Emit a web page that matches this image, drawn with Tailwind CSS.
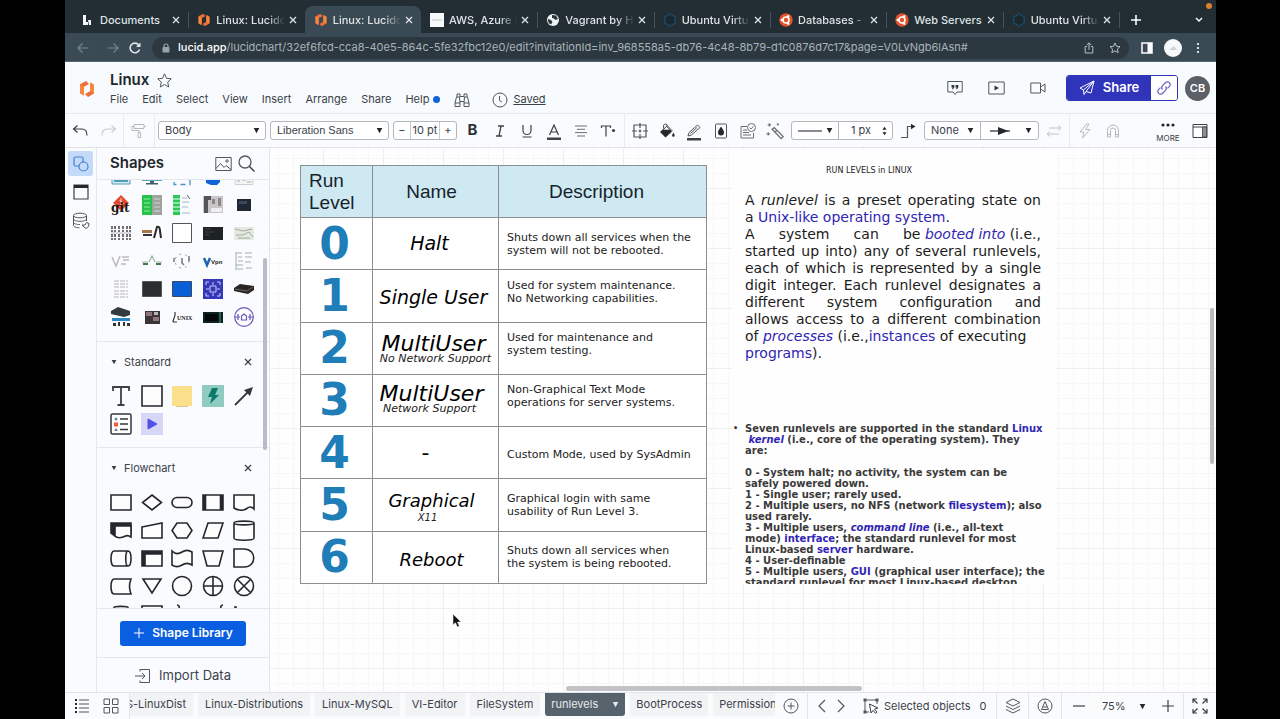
<!DOCTYPE html>
<html lang="en">
<head>
<meta charset="utf-8">
<title>Linux: Lucidchart</title>
<script src="https://cdn.jsdelivr.net/npm/@tailwindcss/browser@4"></script>
</head>
<body class="bg-black font-['Inter','Liberation_Sans',sans-serif] text-[#3a414a]">
<svg class="hidden">
  <symbol id="x" viewBox="0 0 8 8"><path d="M1 1l6 6M7 1L1 7" fill="none" stroke="currentColor" stroke-width="1.3"/></symbol>
  <symbol id="down" viewBox="0 0 8 8"><path d="M.8 1.2h6.4L4 7z" fill="currentColor"/></symbol>
  <symbol id="lucid" viewBox="0 0 16 18"><path d="M7 1L1 4.200v9l4 2.300V6.800L10 4zM9 17l6-3.400V4.800l-4-2.300v8.700L6 14z" fill="#ee6c35"/><path d="M1 4.200l4 2.600v8.700l-4-2.300zM11 2.500l4 2.300v8.800l-4-2.400z" fill="#f7873f"/></symbol>
  <symbol id="ubuntu" viewBox="0 0 14 14"><circle cx="7" cy="7" r="6.700" fill="#e2532c"/><circle cx="7" cy="7" r="3" fill="none" stroke="#fff" stroke-width="1.500"/><circle cx="2.800" cy="7" r="1.200" fill="#fff"/><circle cx="9.200" cy="3.200" r="1.200" fill="#fff"/><circle cx="9.200" cy="10.800" r="1.200" fill="#fff"/></symbol>
  <symbol id="hexa" viewBox="0 0 14 14"><path d="M7 1l5.200 3v6L7 13l-5.200-3V4z" fill="#1b2830" stroke="#1b4a63" stroke-width="1.400"/></symbol>
</svg>
<div class="ml-[65px] mr-16 flex h-screen flex-col overflow-hidden bg-[#fafbfd]">

  <!-- Browser tabs -->
  <div class="relative flex h-[33px] shrink-0 items-end bg-[#222e34] pl-[7px] text-[11px] font-medium text-[#dfe3e5]">
    <div class="flex h-[27px] min-w-0 flex-1 items-center pl-[9px] pr-2 pt-px"><svg class="h-[14px] w-[14px] shrink-0" viewBox="0 0 14 14"><path d="M2 2h3v7h2v3H2zM7 7h3v5H8z" fill="#f4f6f7"/></svg><span class="ml-[5px] flex-1 overflow-hidden whitespace-nowrap">Documents</span><button aria-label="Close tab" class="ml-1"><svg class="size-2"><use href="#x"/></svg></button></div>
    <div class="relative flex h-[27px] min-w-0 flex-1 items-center pl-[9px] pr-2 pt-px"><i class="absolute left-0 top-[6px] h-4 w-px bg-[#46535a]"></i><svg class="h-[14px] w-[14px] shrink-0"><use href="#lucid"/></svg><span class="ml-[5px] flex-1 overflow-hidden whitespace-nowrap mask-r-from-75%">Linux: Lucidchart</span><button aria-label="Close tab" class="ml-1"><svg class="size-2"><use href="#x"/></svg></button></div>
    <div class="flex h-[27px] min-w-0 flex-1 items-center rounded-t-lg bg-[#3a4a54] pl-[9px] pr-2 pt-px"><svg class="h-[14px] w-[14px] shrink-0"><use href="#lucid"/></svg><span class="ml-[5px] flex-1 overflow-hidden whitespace-nowrap mask-r-from-75%">Linux: Lucidchart</span><button aria-label="Close tab" class="ml-1"><svg class="size-2"><use href="#x"/></svg></button></div>
    <div class="flex h-[27px] min-w-0 flex-1 items-center pl-[9px] pr-2 pt-px"><svg class="h-[14px] w-[14px] shrink-0" viewBox="0 0 14 14"><path d="M0 0h14v14H0z" fill="#f6faf9"/><path d="M2 7h10" stroke="#b9cdc9"/></svg><span class="ml-[5px] flex-1 overflow-hidden whitespace-nowrap mask-r-from-75%">AWS, Azure &amp; GCP</span><button aria-label="Close tab" class="ml-1"><svg class="size-2"><use href="#x"/></svg></button></div>
    <div class="relative flex h-[27px] min-w-0 flex-1 items-center pl-[9px] pr-2 pt-px"><i class="absolute left-0 top-[6px] h-4 w-px bg-[#46535a]"></i><svg class="h-[14px] w-[14px] shrink-0" viewBox="0 0 14 14"><circle cx="7" cy="7" r="6" fill="#f1f3f4"/><path d="M2 6l3 1 1.500 2-1.500 2.500C3 11 1.500 8.500 2 6zM6 2l4 .5L12 6 9.500 7 8 5.500 6 5z" fill="#2a363c"/></svg><span class="ml-[5px] flex-1 overflow-hidden whitespace-nowrap mask-r-from-75%">Vagrant by HashiCorp</span><button aria-label="Close tab" class="ml-1"><svg class="size-2"><use href="#x"/></svg></button></div>
    <div class="relative flex h-[27px] min-w-0 flex-1 items-center pl-[9px] pr-2 pt-px"><i class="absolute left-0 top-[6px] h-4 w-px bg-[#46535a]"></i><svg class="h-[14px] w-[14px] shrink-0"><use href="#hexa"/></svg><span class="ml-[5px] flex-1 overflow-hidden whitespace-nowrap mask-r-from-75%">Ubuntu Virtual</span><button aria-label="Close tab" class="ml-1"><svg class="size-2"><use href="#x"/></svg></button></div>
    <div class="relative flex h-[27px] min-w-0 flex-1 items-center pl-[9px] pr-2 pt-px"><i class="absolute left-0 top-[6px] h-4 w-px bg-[#46535a]"></i><svg class="h-[14px] w-[14px] shrink-0"><use href="#ubuntu"/></svg><span class="ml-[5px] flex-1 overflow-hidden whitespace-nowrap mask-r-from-80%">Databases - MySQL</span><button aria-label="Close tab" class="ml-1"><svg class="size-2"><use href="#x"/></svg></button></div>
    <div class="relative flex h-[27px] min-w-0 flex-1 items-center pl-[9px] pr-2 pt-px"><i class="absolute left-0 top-[6px] h-4 w-px bg-[#46535a]"></i><svg class="h-[14px] w-[14px] shrink-0"><use href="#ubuntu"/></svg><span class="ml-[5px] flex-1 overflow-hidden whitespace-nowrap">Web Servers</span><button aria-label="Close tab" class="ml-1"><svg class="size-2"><use href="#x"/></svg></button></div>
    <div class="relative flex h-[27px] min-w-0 flex-1 items-center pl-[9px] pr-2 pt-px"><i class="absolute left-0 top-[6px] h-4 w-px bg-[#46535a]"></i><svg class="h-[14px] w-[14px] shrink-0"><use href="#hexa"/></svg><span class="ml-[5px] flex-1 overflow-hidden whitespace-nowrap mask-r-from-75%">Ubuntu Virtual</span><button aria-label="Close tab" class="ml-1"><svg class="size-2"><use href="#x"/></svg></button></div>
    <div class="relative flex h-[27px] w-[97px] shrink-0 items-center justify-between pl-3 pr-[13px]"><i class="absolute left-0 top-[6px] h-4 w-px bg-[#46535a]"></i>
      <button aria-label="New tab"><svg class="size-[10px]" viewBox="0 0 10 10"><path d="M5 0v10M0 5h10" stroke="#fff" stroke-width="1.600"/></svg></button>
      <button aria-label="Search tabs"><svg class="size-2" viewBox="0 0 8 8"><path d="M1 2l3 3 3-3" fill="none" stroke="#fff" stroke-width="1.400"/></svg></button>
    </div>
    <i class="absolute right-1 top-[3px] size-[6px] rounded-full bg-[#d98032]"></i>
  </div>

  <!-- Address bar -->
  <div class="flex h-[29px] shrink-0 items-center border-b border-[#56646d] bg-[#3a4a54] pt-px text-[#dfe3e5]">
    <div class="flex w-[87px] items-center gap-[18px] pl-3">
      <button aria-label="Back" class="text-[#76848c]"><svg class="block size-3" viewBox="0 0 12 12"><path d="M11.500 6H1M5.500 1.500L1 6l4.500 4.500" fill="none" stroke="currentColor" stroke-width="1.200"/></svg></button>
      <button aria-label="Forward" class="text-[#76848c]"><svg class="block size-3" viewBox="0 0 12 12"><path d="M.5 6H11M6.500 1.500L11 6l-4.500 4.500" fill="none" stroke="currentColor" stroke-width="1.200"/></svg></button>
      <button aria-label="Reload" class="-ml-2"><svg class="block size-3" viewBox="0 0 12 12"><path d="M10.500 7.500A4.800 4.800 0 1 1 9.700 2.900" fill="none" stroke="currentColor" stroke-width="1.600"/><path d="M11.500.5v4.500H7z" fill="currentColor"/></svg></button>
    </div>
    <div class="flex h-[22px] min-w-0 flex-1 items-center rounded-full bg-[#2c3840] pl-[9px] pr-2">
      <svg class="size-[10px] shrink-0" viewBox="0 0 10 10"><rect x="1.500" y="4" width="7" height="5.500" rx="1" fill="#98a3aa"/><path d="M3 4.500V3a2 2 0 0 1 4 0v1.500" fill="none" stroke="#98a3aa" stroke-width="1.200"/></svg>
      <p class="ml-[7px] flex-1 overflow-hidden whitespace-nowrap text-[11px] text-[#a9b3b9]"><span class="font-medium text-white">lucid.app</span>/lucidchart/32ef6fcd-cca8-40e5-864c-5fe32fbc12e0/edit?invitationId=inv_968558a5-db76-4c48-8b79-d1c0876d7c17&amp;page=V0LvNgb6lAsn#</p>
      <button aria-label="Share page"><svg class="block size-3" viewBox="0 0 12 12"><path d="M4 4.500H2.200v6.500h7.600V4.500H8M6 8V1M3.800 3L6 .8 8.200 3" fill="none" stroke="#b6bfc4"/></svg></button>
      <button aria-label="Bookmark" class="ml-[14px]"><svg class="block size-3" viewBox="0 0 12 12"><path d="M6 1l1.500 3.300 3.500.4-2.600 2.400.7 3.500L6 8.900l-3.100 1.700.7-3.500L1 4.700l3.500-.4z" fill="none" stroke="#b6bfc4"/></svg></button>
    </div>
    <div class="flex w-[87px] shrink-0 items-center pl-3">
      <svg class="size-3" viewBox="0 0 12 12"><path d="M1 1h10v10H1z" fill="none" stroke="#fff" stroke-width="1.500"/><path d="M6.500 1H11v10H6.500z" fill="#fff"/></svg>
      <i class="ml-[11px] flex size-[18px] items-center justify-center rounded-full bg-[#f7f9fa]"><svg class="size-2" viewBox="0 0 8 8"><path d="M0 6h8L5 2z" fill="#cfd5d8"/></svg></i>
      <button aria-label="Browser menu" class="ml-[14px]"><svg class="block h-3 w-1" viewBox="0 0 4 12"><g fill="#fff"><circle cx="2" cy="2" r="1.100"/><circle cx="2" cy="6" r="1.100"/><circle cx="2" cy="10" r="1.100"/></g></svg></button>
    </div>
  </div>

  <!-- Document header -->
  <header class="flex h-[52px] shrink-0 items-center border-b border-[#e6e9ee] bg-[#f8fbfd] pl-[14px] pr-[6px] pt-px">
    <svg class="mt-[2px] h-[18px] w-4 shrink-0"><use href="#lucid"/></svg>
    <div class="ml-[15px] pt-[3px]">
      <div class="flex h-5 items-center gap-2"><h1 class="text-[15px] font-semibold text-[#20252b]">Linux</h1>
        <button aria-label="Favorite"><svg class="block size-[15px]" viewBox="0 0 15 15"><path d="M7.500.8l2 4.500 4.800.5-3.600 3.300 1 4.900-4.200-2.500L3.300 14l1-4.900L.7 5.800l4.800-.5z" fill="none" stroke="#50575f"/></svg></button></div>
      <nav class="flex h-[18px] items-center gap-[14px] text-[11px]">
        <button>File</button><button>Edit</button><button>Select</button><button>View</button><button>Insert</button><button>Arrange</button><button>Share</button><button class="flex items-center gap-1">Help<i class="size-[7px] rounded-full bg-[#0f62dc]"></i></button>
        <button aria-label="Find"><svg class="block size-4" viewBox="0 0 16 16"><path d="M2.500 5L1 11v3.500h5V11L5.500 5zM13.500 5l1.500 6v3.500h-5V11l.5-6zM3 5V2h3v3M10 5V2h3v3M6 4.500h4M6 9.500h4M1 11h5M10 11h5" fill="none" stroke="#50575f"/></svg></button>
        <button class="ml-2 flex items-center gap-[5px] underline"><svg class="block size-4" viewBox="0 0 16 16"><circle cx="8" cy="8" r="7" fill="none" stroke="#50575f"/><path d="M7.500 4v4.500l2.500 1.500" fill="none" stroke="#50575f"/></svg>Saved</button>
      </nav>
    </div>
    <div class="ml-auto flex items-center">
      <button aria-label="Comments"><svg class="block size-4" viewBox="0 0 16 16"><path d="M.8 1.500h14.400v10.500H10L8 14.500 6 12H.8z" fill="none" stroke="#50575f"/><path d="M4.500 5h2.800v2.500L6 9.200H5l.7-1.700H4.500zM8.500 5h2.800v2.500L10 9.200H9l.7-1.700H8.500z" fill="#33393f"/></svg></button>
      <button aria-label="Present" class="ml-[25px]"><svg class="block h-4 w-[17px]" viewBox="0 0 17 16"><path d="M.8 2h15.400v12H.8z" fill="none" stroke="#50575f"/><path d="M6.500 5.500v5l4.500-2.500z" fill="#33393f"/></svg></button>
      <button aria-label="Video" class="ml-[25px]"><svg class="block size-4" viewBox="0 0 16 16"><path d="M.8 3h9.700v10H.8zM10.500 7l4.500-3v8l-4.500-3" fill="none" stroke="#50575f"/></svg></button>
      <div class="ml-5 flex h-[26px] overflow-hidden rounded-[3px] border border-[#2f34ba]">
        <button class="flex w-[84px] items-center justify-center gap-2 bg-[#2f34ba] text-[13px] font-semibold text-white"><svg class="size-4" viewBox="0 0 16 16"><path d="M15 1L1 8l3.500 2L15 1 7 11.500 12 13zM4.500 10L5 14.500 7 11.500" fill="none" stroke="#fff"/></svg>Share</button>
        <button aria-label="Copy link" class="flex w-[26px] items-center justify-center bg-white"><svg class="size-4" viewBox="0 0 16 16"><g fill="none" stroke="#6a62c4" stroke-width="1.200"><path d="M6.500 9.500a2.700 2.700 0 0 1 0-3.800L9.700 2.500a2.700 2.700 0 0 1 3.800 3.800L11.500 8.300"/><path d="M9.500 6.500a2.700 2.700 0 0 1 0 3.800L6.300 13.500a2.700 2.700 0 0 1-3.800-3.800L4.500 7.700"/></g></svg></button>
      </div>
      <button class="ml-[7px] flex size-[25px] items-center justify-center rounded-full bg-[#5c6066] text-[11px] font-semibold text-white">CB</button>
    </div>
  </header>

  <!-- Toolbar -->
  <div class="flex h-[34px] shrink-0 items-center border-b border-[#dfe3e9] bg-[#fafbfd] text-[12px]">
    <button aria-label="Undo" class="flex w-[30px] justify-center"><svg class="size-4" viewBox="0 0 16 16"><path d="M5.500 2.500L1.500 6l4 3.500M1.500 6H10c3.500 0 5 3 5 6.500" fill="none" stroke="#3b4148" stroke-width="1.200"/></svg></button>
    <button aria-label="Redo" class="flex w-7 justify-center"><svg class="size-4" viewBox="0 0 16 16"><path d="M10.500 2.500l4 3.500-4 3.500M14.500 6H6C2.500 6 1 9 1 12.500" fill="none" stroke="#c9ccd1" stroke-width="1.200"/></svg></button>
    <button aria-label="Format painter" class="flex h-full w-8 items-center justify-center border-x border-[#e8ebf0]"><svg class="size-4" viewBox="0 0 16 16"><path d="M3 1.500h10v4H3zM3 3.500H1v4h7v2M7 9.500h2.500v5H7zM13 3.500h2" fill="none" stroke="#b5b9bf"/></svg></button>
    <div class="relative ml-[3px] w-[108px]"><select aria-label="Text style" class="block h-[19px] w-full appearance-none rounded-[3px] border border-[#b4b8be] bg-white pl-[6px] text-[11px]"><option>Body</option></select><svg class="pointer-events-none absolute right-[6px] top-[6px] size-[7px] text-[#23282d]"><use href="#down"/></svg></div>
    <div class="relative ml-1 w-[119px]"><select aria-label="Font" class="block h-[19px] w-full appearance-none rounded-[3px] border border-[#b4b8be] bg-white pl-[6px] font-['Liberation_Sans',sans-serif] text-[11px]"><option>Liberation Sans</option></select><svg class="pointer-events-none absolute right-[6px] top-[6px] size-[7px] text-[#23282d]"><use href="#down"/></svg></div>
    <div class="ml-1 flex h-[19px] w-16 items-stretch rounded-[3px] border border-[#b4b8be] bg-white text-[11px]"><button class="w-4 leading-none" aria-label="Smaller">−</button><input aria-label="Font size" value="10 pt" class="w-[30px] border-x border-[#c9cdd2] text-center text-[11px]"><button class="w-4 leading-none" aria-label="Larger">+</button></div>
    <div class="ml-[2px] flex h-full items-center">
      <button aria-label="Bold" class="w-[27px] text-[15px] font-bold text-[#2c3136]">B</button>
      <button aria-label="Italic" class="flex w-[27px] justify-center"><svg class="size-3" viewBox="0 0 12 12"><path d="M4 1h6M2 11h6M7 1L5 11" fill="none" stroke="#3b4148" stroke-width="1.300"/></svg></button>
      <button aria-label="Underline" class="flex w-[27px] justify-center"><svg class="size-[14px]" viewBox="0 0 14 14"><path d="M3 1v5.500a4 4 0 0 0 8 0V1M2.500 13h9" fill="none" stroke="#3b4148" stroke-width="1.200"/></svg></button>
      <button aria-label="Text color" class="flex w-[27px] justify-center"><svg class="mt-1 size-[18px]" viewBox="0 0 18 18"><path d="M4.500 11L9 1l4.500 10M6 8h6" fill="none" stroke="#3b4148" stroke-width="1.200"/><path d="M2 13.500h14v2.500H2z" fill="#3b4148"/></svg></button>
      <button aria-label="Align" class="flex w-[27px] justify-center"><svg class="size-[14px]" viewBox="0 0 14 14"><path d="M1 2h12M3 5.300h8M1 8.600h12M3 12h8" stroke="#6a7076"/></svg></button>
      <button aria-label="Text options" class="flex w-[27px] justify-center"><svg class="h-[14px] w-4" viewBox="0 0 16 14"><path d="M1.500 4V2h9v2M6 2v10.500" fill="none" stroke="#3b4148" stroke-width="1.200"/><circle cx="13.500" cy="6.500" r="1.600" fill="#3b4148"/></svg></button>
    </div>
    <i class="ml-[3px] mr-px h-full w-px bg-[#e8ebf0]"></i>
    <div class="flex items-center">
      <button aria-label="Shape options" class="flex w-[27px] justify-center"><svg class="size-4" viewBox="0 0 16 16"><path d="M2 2h12v12H2z" fill="none" stroke="#50575f" stroke-width="1.200"/><path d="M8 0v5M8 11v5M0 8h5M11 8h5M6.500 8h3M8 6.500v3" stroke="#50575f" stroke-width="1.200"/></svg></button>
      <button aria-label="Fill" class="flex w-[27px] justify-center"><svg class="size-4" viewBox="0 0 16 16"><path d="M4.500 5.500V3a2 2 0 0 1 4 0M7.500 2l6 6" fill="none" stroke="#50575f"/><path d="M7.500 3L1 9l5.500 5.500L13 8.500z" fill="#24282c"/><path d="M7.500 3.500L4 7h7.500z" fill="#fff" stroke="#24282c" stroke-width=".6"/><path d="M14.300 9.500c1 1.800 1.400 2.300 1.400 3a1.300 1.300 0 0 1-2.600 0c0-.7.500-1.200 1.200-3z" fill="#24282c"/></svg></button>
      <button aria-label="Line color" class="flex w-[27px] justify-center"><svg class="mt-1 size-[18px]" viewBox="0 0 18 18"><path d="M3 12l1-3.500L12.500 1 15 3.500 6.500 11zM12 3.500L5.500 9.500" fill="none" stroke="#50575f"/><path d="M2 14h14v2.500H2z" fill="#3b4148"/></svg></button>
      <button aria-label="Opacity" class="flex w-[27px] justify-center"><svg class="size-4" viewBox="0 0 16 16"><rect x="2.500" y="1" width="11" height="14" rx="1" fill="none" stroke="#50575f"/><path d="M8 3.500c1.500 2.500 3 4 3 6a3 3 0 0 1-6 0c0-2 1.500-3.500 3-6z" fill="#24282c"/></svg></button>
      <button aria-label="Data" class="flex w-[27px] justify-center"><svg class="size-4" viewBox="0 0 16 16"><path d="M7 3.500H1v11.500h12.500V10M3 7h4M3 9.500h6M3 12h8" fill="none" stroke="#6a7076"/><circle cx="11.500" cy="4.500" r="4" fill="#fff" stroke="#6a7076"/><path d="M9.500 4.500L11 6l2.500-2.800" fill="none" stroke="#6a7076"/></svg></button>
      <button aria-label="Magic" class="flex w-[27px] justify-center"><svg class="size-[18px]" viewBox="0 0 16 16"><path d="M5.500 6.500L7.300 5l8 8-1.800 1.800zM8 9l1.700-1.700" fill="none" stroke="#6a7076" stroke-width="1.200"/><path d="M3 1v3M1.500 2.500h3M10.500 1v2M9.500 2h2M2 9v3M.5 10.500h3" stroke="#6a7076"/></svg></button>
    </div>
    <div class="ml-[3px] flex h-[19px] w-[102px] rounded-[3px] border border-[#b4b8be] bg-white text-[11px]">
      <button aria-label="Line style" class="flex w-[47px] items-center justify-center gap-1 border-r border-[#b4b8be]"><svg class="h-2 w-6" viewBox="0 0 24 8"><path d="M0 4h24" stroke="#3b4148" stroke-width="1.200"/></svg><svg class="size-[7px] text-[#23282d]"><use href="#down"/></svg></button>
      <input aria-label="Line width" value="1 px" class="w-[42px] pl-3 text-[11px]"><svg class="mt-1 h-[10px] w-[7px]" viewBox="0 0 7 12"><path d="M1 4.500L3.500 1 6 4.500zM1 7.500L3.500 11 6 7.500z" fill="#23282d"/></svg>
    </div>
    <button aria-label="Line shape" class="flex w-[30px] justify-center"><svg class="size-4" viewBox="0 0 16 16"><path d="M1 14.500h6.500V3.500h4" fill="none" stroke="#50575f" stroke-width="1.200"/><path d="M11 .8l4.500 2.700L11 6.200z" fill="#24282c"/></svg></button>
    <div class="ml-px flex h-[19px] w-[115px] rounded-[3px] border border-[#b4b8be] bg-white text-[11px]">
      <div class="relative w-14 border-r border-[#b4b8be]"><select aria-label="Line start" class="block h-full w-full appearance-none pl-[6px]"><option>None</option></select><svg class="pointer-events-none absolute right-[6px] top-[5px] size-[7px] text-[#23282d]"><use href="#down"/></svg></div>
      <button aria-label="Line end" class="flex flex-1 items-center justify-between pl-[9px] pr-[6px]"><svg class="h-2 w-5" viewBox="0 0 20 8"><path d="M0 4h20" stroke="#24282c" stroke-width="1.200"/><path d="M8 0L18.500 4 8 8z" fill="#24282c"/></svg><svg class="size-[7px] text-[#23282d]"><use href="#down"/></svg></button>
    </div>
    <button aria-label="Swap ends" class="flex w-[30px] justify-center"><svg class="size-4" viewBox="0 0 16 16"><path d="M3 5h12M12 2.500L15 5l-3 2.500M13 11H1M4 8.500L1 11l3 2.500" fill="none" stroke="#c0c4c9"/></svg></button>
    <i class="h-full w-px bg-[#e8ebf0]"></i>
    <button aria-label="Actions" class="flex w-[30px] justify-center"><svg class="size-4" viewBox="0 0 16 16"><path d="M9.500 1L3 9h4l-1.500 6L13 6.500H8.500L12 1z" fill="none" stroke="#b5b9bf"/></svg></button>
    <button aria-label="Snap" class="flex w-[25px] justify-center"><svg class="size-4" viewBox="0 0 16 16"><path d="M2.500 14V7.500a5.500 5.500 0 0 1 11 0V14h-3V7.500a2.500 2.500 0 0 0-5 0V14zM2.500 11.500h3M10.500 11.500h3" fill="none" stroke="#b5b9bf"/></svg></button>
    <button class="ml-auto flex w-8 flex-col items-center pt-1 text-[8px] leading-[10px]"><svg class="mb-[6px] h-1 w-[14px]" viewBox="0 0 14 4"><g fill="#24282c"><circle cx="2" cy="2" r="1.600"/><circle cx="7" cy="2" r="1.600"/><circle cx="12" cy="2" r="1.600"/></g></svg>MORE</button>
    <button aria-label="Panel" class="flex w-8 justify-center"><svg class="size-4" viewBox="0 0 16 16"><path d="M1 1.500h14v13H1z" fill="#fff" stroke="#3b4148"/><path d="M1 4h14" stroke="#3b4148"/><path d="M10.500 4h4v10h-4z" fill="#8a9096" stroke="#3b4148" stroke-width=".8"/></svg></button>
  </div>

  <div class="flex min-h-0 flex-1">
    <!-- Rail -->
    <div class="flex w-8 shrink-0 flex-col items-center border-r border-[#e3e7ee] pt-[3px]">
      <button aria-label="Shapes" class="flex size-[25px] items-center justify-center rounded-[3px] bg-[#c3daf8]"><svg class="size-4" viewBox="0 0 16 16"><rect x="1" y="1" width="9" height="9" rx="1.500" fill="none" stroke="#4783d4" stroke-width="1.200"/><circle cx="10.500" cy="10.500" r="4.500" fill="#c3daf8" stroke="#4783d4" stroke-width="1.200"/></svg></button>
      <button aria-label="Frames" class="mt-2"><svg class="block size-4" viewBox="0 0 16 16"><path d="M1 1h14v14H1z" fill="none" stroke="#3b4148" stroke-width="1.200"/><path d="M1 1h14v3H1z" fill="#24282c"/></svg></button>
      <button aria-label="Data" class="mt-3"><svg class="block size-[18px]" viewBox="0 0 18 18"><g fill="none" stroke="#50575f"><ellipse cx="8" cy="3.500" rx="6.500" ry="2.300"/><path d="M1.500 3.500v10c0 1.300 3 2.300 6 2.300M14.500 3.500V9M1.500 7c0 1.300 3 2.300 6.500 2.300S14.500 8.300 14.500 7M1.500 10.300c0 1.300 3 2.300 6.500 2.300"/><path d="M10 13h3l1.500-2.500 2.500 1-.5 3-2.500 2-2-1.500z" fill="#fafbfd"/></g></svg></button>
    </div>

    <!-- Shapes panel -->
    <aside class="flex w-[173px] shrink-0 flex-col border-r border-[#e1e5ec] bg-[#fafbfe]">
      <div class="flex h-8 shrink-0 items-center border-b border-[#e3e7ee] pl-[13px] pr-[14px]"><h2 class="text-[15px] font-semibold text-[#23282d]">Shapes</h2>
        <button aria-label="Images" class="ml-auto"><svg class="block h-4 w-[17px]" viewBox="0 0 17 16"><path d="M.8 1.500h15.400v13H.8z" fill="none" stroke="#50575f"/><path d="M1 12.500l4.500-5 3.500 4 2-2 5 4" fill="none" stroke="#50575f"/><circle cx="12" cy="5" r="1.200" fill="none" stroke="#50575f"/></svg></button>
        <button aria-label="Search" class="ml-[6px]"><svg class="block size-[17px]" viewBox="0 0 17 17"><circle cx="7" cy="7" r="6" fill="none" stroke="#50575f" stroke-width="1.300"/><path d="M11.500 11.500l5 5" stroke="#3b4148" stroke-width="1.500"/></svg></button></div>
      <div class="relative flex-1 overflow-hidden">
        <div class="flex h-[162px] items-end overflow-hidden border-b border-[#e3e7ee] pb-[10px] pl-[9px] pr-[10px]">
          <div class="grid flex-1 grid-cols-5 place-items-center">
            <!-- cloud icons -->
            <svg class="h-7 w-[22px]" viewBox="-1 -4 22 28"><path d="M1 0h18v17H1z" fill="#d2ecf3" stroke="#559cb1"/><path d="M3 14h14" stroke="#4f9cb4" stroke-width="2"/></svg>
            <svg class="h-7 w-[22px]" viewBox="-1 -4 22 28"><path d="M0 0h20v14H0z" fill="#5fa3bd"/><path d="M8 14h4v2H8zM4 16h12v1.500H4z" fill="#40606c"/></svg>
            <svg class="h-7 w-[22px]" viewBox="-1 -4 22 28"><path d="M2 2h16v15.500H2z" fill="none" stroke="#4f93c4" stroke-width="1.300" stroke-dasharray="5 4"/></svg>
            <svg class="h-7 w-[22px]" viewBox="-1 -4 22 28"><path d="M3 2h14v13l-3 3H8l-5-2z" fill="#0f62d8"/></svg>
            <svg class="h-7 w-[22px]" viewBox="-1 -4 22 28"><path d="M1 2h18v15.500H1z" fill="#f4f4f4" stroke="#cfcfcf"/><path d="M3 14h3M8 13h4M13 15h4" stroke="#aaa"/></svg>

            <svg class="h-7 w-[22px]" viewBox="-1 -4 22 28"><path d="M10 0l8 8-8 8-8-8z" fill="#e2492f"/><path d="M8.500 5l4 4M10 3v8" stroke="#fff" stroke-width=".8"/><text x="0" y="17" font-family="DejaVu Serif" font-weight="bold" font-size="12" fill="#1d1512">git</text></svg>
            <svg class="h-7 w-[22px]" viewBox="-1 -4 22 28"><path d="M0 0h10v20H0z" fill="#27c24a"/><path d="M10 0h10v20H10z" fill="#9ea3a0"/><path d="M2 4h6M2 8h6M2 12h6M2 16h6" stroke="#8ff0a2"/><path d="M12 4h6M12 8h6M12 12h6M12 16h6" stroke="#d3d6d4"/></svg>
            <svg class="h-7 w-[22px]" viewBox="-1 -4 22 28"><path d="M1 0h7v20H1z" fill="#2fc653"/><path d="M1 4h7M1 8h7M1 12h7M1 16h7" stroke="#dff" stroke-width="1.200"/><path d="M10 3h5M10 7h7M10 12h6M10 18h8" stroke="#9fb6c6"/><path d="M15 0l3 4" stroke="#555"/></svg>
            <svg class="h-7 w-[22px]" viewBox="-1 -4 22 28"><path d="M0 1h20v17H0z" fill="#c9c6c8"/><path d="M1 1h7v4H5v13H1z" fill="#555"/><path d="M9 4h3v5H9zM15 3h3v8h-3z" fill="#8d8589"/><path d="M8 13h11v4H8z" fill="#eee"/></svg>
            <svg class="h-7 w-[22px]" viewBox="-1 -4 22 28"><path d="M3 4h14v12H3z" fill="#1f2733"/><path d="M5 6h8v3H5z" fill="#3c4a5e"/></svg>

            <svg class="h-7 w-[22px]" viewBox="-1 -4 22 28"><path d="M1 3v14M4 3v14M8 3v14M12 3v14M16 3v14M19 3v14" stroke="#4e4e4e" stroke-width="1.600" stroke-dasharray="3 1 2 2"/><path d="M0 10h20" stroke="#b9b9b9"/></svg>
            <svg class="h-7 w-[22px]" viewBox="-1 -4 22 28"><path d="M0 7h10v3H0z" fill="#a97647"/><path d="M1 12h9" stroke="#333" stroke-width="2"/><path d="M12 15l3-11c2-1 3 1 3 4l1 7" fill="none" stroke="#2a2a2a" stroke-width="2"/></svg>
            <svg class="h-7 w-[22px]" viewBox="-1 -4 22 28"><path d="M.5.5h19v19H.5z" fill="#fff" stroke="#555"/></svg>
            <svg class="h-7 w-[22px]" viewBox="-1 -4 22 28"><path d="M0 4h20v13H0z" fill="#1d2322"/><path d="M2 6h6M2 9h9M2 12h5" stroke="#3a4341"/></svg>
            <svg class="h-7 w-[22px]" viewBox="-1 -4 22 28"><path d="M0 4h20v13H0z" fill="#e4e9e2"/><path d="M1 6l8 2 9-2M2 12h7l6-3 4 5M4 15h12" fill="none" stroke="#9dab9b"/></svg>

            <svg class="h-7 w-[22px]" viewBox="-1 -4 22 28"><path d="M1 6l4 9 4-10M11 6h7M12 9h6M10 13h5" fill="none" stroke="#bbb" stroke-width="1.500"/></svg>
            <svg class="h-7 w-[22px]" viewBox="-1 -4 22 28"><path d="M0 11h6M7 11l3-6 3 6M14 11h6" fill="none" stroke="#9db4a8" stroke-width="1.200"/><path d="M1 13h5M14 13h5" stroke="#3a7a4e" stroke-width="2"/></svg>
            <svg class="h-7 w-[22px]" viewBox="-1 -4 22 28"><circle cx="10" cy="10" r="7" fill="none" stroke="#999" stroke-dasharray="2 4"/><path d="M2 7v4M17 5v5M10 7v5l2 2" stroke="#777" stroke-width="1.500" fill="none"/></svg>
            <svg class="h-7 w-[22px]" viewBox="-1 -4 22 28"><path d="M1 7l3 7 3-7" fill="none" stroke="#1d66b5" stroke-width="2.500"/><text x="8" y="13" font-family="Liberation Sans" font-weight="bold" font-size="6" fill="#222">Vpn</text></svg>
            <svg class="h-7 w-[22px]" viewBox="-1 -4 22 28"><path d="M2 1v18M2 2h6M11 2h7M4 6h4M11 6h7M4 10h5M11 11h6M2 14h7M3 18h6M12 17h6" stroke="#9fb0a7" fill="none"/></svg>

            <svg class="h-7 w-[22px]" viewBox="-1 -4 22 28"><path d="M3 2h14M3 5h14M3 8h14M3 12h14M3 15h14M3 18h14" stroke="#b5b5b5" stroke-width="1.200" stroke-dasharray="5 1"/></svg>
            <svg class="h-7 w-[22px]" viewBox="-1 -4 22 28"><path d="M.5 2.500h19v15H.5z" fill="#2c2d30" stroke="#555"/></svg>
            <svg class="h-7 w-[22px]" viewBox="-1 -4 22 28"><path d="M.5 2.500h19v15H.5z" fill="#0a5fd6" stroke="#3b4a66"/></svg>
            <svg class="h-7 w-[22px]" viewBox="-1 -4 22 28"><path d="M0 0h20v20H0z" fill="#3438b8"/><path d="M3 6V3h3M14 3h3v3M17 14v3h-3M6 17H3v-3M7 7h6v6H7zM10 3v3M10 14v3M3 10h3M14 10h3" fill="none" stroke="#c9cbf5"/></svg>
            <svg class="h-7 w-[22px]" viewBox="-1 -4 22 28"><path d="M0 9l6-4 14 2v4l-6 4-14-3z" fill="#2a2624"/><path d="M1 10l12 2 6-4" fill="none" stroke="#6a625e"/></svg>

            <svg class="h-7 w-[22px]" viewBox="-1 -4 22 28"><path d="M0 4l7-4 12 4v4l-6 2L0 7z" fill="#333a40"/><path d="M1 11h18v3H1z" fill="#2d86c4"/><path d="M2 16h3v3H2zM7 15h2v4H7zM12 15h2v4h-2zM16 16h3v3h-3z" fill="#333"/></svg>
            <svg class="h-7 w-[22px]" viewBox="-1 -4 22 28"><path d="M3 4h15v13H3z" fill="#3c3538"/><path d="M4 5h6v4H4zM11 10h6v4h-6z" fill="#91757b"/><path d="M12 5h4v3h-4z" fill="#c0b5b5"/></svg>
            <svg class="h-7 w-[22px]" viewBox="-1 -4 22 28"><path d="M1 15c0-4 3-5 2-10M1 15h4" fill="none" stroke="#333" stroke-width="1.200"/><text x="5" y="13" font-family="Liberation Serif" font-weight="bold" font-size="6" fill="#222">UNIX</text></svg>
            <svg class="h-7 w-[22px]" viewBox="-1 -4 22 28"><path d="M0 5h20v11H0z" fill="#0f2220"/><path d="M2 7h13v7H2z" fill="#050808"/><path d="M17 5v11" stroke="#38a06c"/></svg>
            <svg class="h-7 w-[22px]" viewBox="-1 -4 22 28"><circle cx="10" cy="10" r="9.300" fill="none" stroke="#6c56b8" stroke-width="1.200"/><path d="M7.500 13V9L10 7l2.500 2v4zM1 10h5M14 10h5M4 7v6M16 7v6" fill="none" stroke="#6c56b8" stroke-width="1.200"/></svg>
          </div>
        </div>

        <section class="h-[106px] border-b border-[#e3e7ee] pl-[9px] pr-[10px]">
          <div class="flex h-10 items-center pl-[5px] pr-[7px] text-[11px]"><svg class="size-[6px]"><use href="#down"/></svg><h3 class="ml-[7px]">Standard</h3><button aria-label="Close Standard" class="ml-auto"><svg class="block size-2"><use href="#x"/></svg></button></div>
          <div class="grid grid-cols-5 place-items-center">
            <svg class="h-7 w-[22px]" viewBox="-1 -4 22 28"><path d="M2 5V1h16v4M10 1v18M6.500 19h7" fill="none" stroke="#3b4148" stroke-width="1.800"/></svg>
            <svg class="h-7 w-[22px]" viewBox="-1 -4 22 28"><path d="M0 0h20v20H0z" fill="#fdfdfd" stroke="#24282c" stroke-width="1.600"/></svg>
            <svg class="h-7 w-[22px]" viewBox="-1 -4 22 28"><path d="M0 0h20v20H0z" fill="#fbdf8b"/><path d="M4 20.500h12" stroke="#d8c48e"/></svg>
            <svg class="h-7 w-[22px]" viewBox="-1 -4 22 28"><path d="M-1-1h22v22H-1z" fill="#8fcbc0"/><path d="M9 2L5 11h4l-2 7 9-9h-4l3-7z" fill="#0b7a6c"/></svg>
            <svg class="h-7 w-[22px]" viewBox="-1 -4 22 28"><path d="M1 19L14 6" stroke="#33393f" stroke-width="1.800"/><path d="M19 1l-3 9-6-6z" fill="#33393f"/></svg>
            <svg class="h-7 w-[22px]" viewBox="-1 -4 22 28"><rect width="20" height="20" rx="1.500" fill="#fdfdfd" stroke="#33393f" stroke-width="1.500"/><path d="M9 5h8M9 10h8M9 15.500h8" stroke="#33393f" stroke-width="1.300"/><circle cx="5" cy="5" r="1.500" fill="#7a809a"/><path d="M3 8.500h4v4H3z" fill="#ef5b32"/><path d="M5 14l2 3H3z" fill="#7a809a"/></svg>
            <svg class="h-7 w-[22px]" viewBox="-1 -4 22 28"><path d="M-1-1h22v22H-1z" fill="#d5d6f8"/><path d="M6 5l9 5-9 5z" fill="#5150e8" stroke="#5150e8" stroke-linejoin="round"/></svg>
          </div>
        </section>

        <section class="pl-[9px] pr-[10px]">
          <div class="flex h-10 items-center pl-[5px] pr-[7px] text-[11px]"><svg class="size-[6px]"><use href="#down"/></svg><h3 class="ml-[7px]">Flowchart</h3><button aria-label="Close Flowchart" class="ml-auto"><svg class="block size-2"><use href="#x"/></svg></button></div>
          <div class="grid grid-cols-5 place-items-center fill-[#fdfdfd] stroke-[#24282c] stroke-[1.6]">
            <svg class="h-7 w-[22px]" viewBox="-1 -4 22 28"><path d="M0 3h20v15H0z"/></svg>
            <svg class="h-7 w-[22px]" viewBox="-1 -4 22 28"><path d="M10 3l9.500 7.500L10 18 .5 10.500z"/></svg>
            <svg class="h-7 w-[22px]" viewBox="-1 -4 22 28"><rect y="5.500" width="20" height="10" rx="5"/></svg>
            <svg class="h-7 w-[22px]" viewBox="-1 -4 22 28"><path d="M0 3h20v15H0zM2.500 3v15M17.500 3v15M1.500 3v15M18.500 3v15"/></svg>
            <svg class="h-7 w-[22px]" viewBox="-1 -4 22 28"><path d="M0 3h20v14c-4-4-6-1-9 .5S3 18 0 16z"/></svg>

            <svg class="h-7 w-[22px]" viewBox="-1 -4 22 28"><path d="M0 3h20v11h-4V6H4v10L0 13z" fill="#24282c"/><path d="M4 6h16v11c-4-3-5-1-8 0s-6 1-8-1z"/></svg>
            <svg class="h-7 w-[22px]" viewBox="-1 -4 22 28"><path d="M0 7l20-4v15H0z"/></svg>
            <svg class="h-7 w-[22px]" viewBox="-1 -4 22 28"><path d="M5 3h10l5 7.500-5 7.500H5L0 10.500z"/></svg>
            <svg class="h-7 w-[22px]" viewBox="-1 -4 22 28"><path d="M5 3h15l-5 15H0z"/></svg>
            <svg class="h-7 w-[22px]" viewBox="-1 -4 22 28"><path d="M0 3v15c0 3 20 3 20 0V3M0 3c0-2.500 20-2.500 20 0S0 5.500 0 3z"/></svg>

            <svg class="h-7 w-[22px]" viewBox="-1 -4 22 28"><path d="M3 3h14c4 0 4 15 0 15H3C-1 18-1 3 3 3zM17 3c-3 0-3 15 0 15"/></svg>
            <svg class="h-7 w-[22px]" viewBox="-1 -4 22 28"><path d="M0 3h20v15H0zM1.500 3v15M0 4.500h20M3 3v15M0 6h20"/></svg>
            <svg class="h-7 w-[22px]" viewBox="-1 -4 22 28"><path d="M0 3c3 3 7 3 10 1s7-2 10 0v13c-3-2-7-2-10 0s-7 2-10 0z"/></svg>
            <svg class="h-7 w-[22px]" viewBox="-1 -4 22 28"><path d="M0 3h20l-4 15H4z"/></svg>
            <svg class="h-7 w-[22px]" viewBox="-1 -4 22 28"><path d="M0 1h10c13 0 13 18 0 18H0z"/></svg>

            <svg class="h-7 w-[22px]" viewBox="-1 -4 22 28"><path d="M3 3h17c-2 5-2 10 0 15H3C-1 18-1 3 3 3z"/></svg>
            <svg class="h-7 w-[22px]" viewBox="-1 -4 22 28"><path d="M1 3h18l-9 14z"/></svg>
            <svg class="h-7 w-[22px]" viewBox="-1 -4 22 28"><circle cx="10" cy="10" r="9.500"/></svg>
            <svg class="h-7 w-[22px]" viewBox="-1 -4 22 28"><circle cx="10" cy="10" r="9.500"/><path d="M10 .5v19M.5 10h19"/></svg>
            <svg class="h-7 w-[22px]" viewBox="-1 -4 22 28"><circle cx="10" cy="10" r="9.500"/><path d="M3.500 3.500l13 13M16.500 3.500l-13 13"/></svg>

            <svg class="h-7 w-[22px]" viewBox="-1 -4 22 28"><path d="M3 6V3.500c0-1.500 14-1.500 14 0V6z"/></svg>
            <svg class="h-7 w-[22px]" viewBox="-1 -4 22 28"><path d="M0 2h20v14H0z"/></svg>
            <svg class="h-7 w-[22px]" viewBox="-1 -4 22 28"><path d="M5 1c3 0 2 3 3 9" fill="none"/></svg>
            <svg class="h-7 w-[22px]" viewBox="-1 -4 22 28"><path d="M20 1c-3 0-2 3-3 9" fill="none"/></svg>
            <svg class="h-7 w-[22px]" viewBox="-1 -4 22 28"><path d="M0 3h2v9" fill="none"/></svg>
          </div>
        </section>
        <i class="absolute right-[2px] top-[78px] h-[192px] w-1 rounded-full bg-[#b9bcc4]"></i>
      </div>
      <div class="flex h-[49px] shrink-0 items-center justify-center border-t border-[#e3e7ee]"><button class="flex h-[25px] w-[126px] items-center justify-center gap-[7px] rounded-[3px] bg-[#0a5fe0] text-[12px] font-semibold text-white"><svg class="size-3" viewBox="0 0 12 12"><path d="M6 1v10M1 6h10" stroke="#fff"/></svg>Shape Library</button></div>
      <div class="flex h-[35px] shrink-0 items-center justify-center border-t border-[#e3e7ee] pt-[2px]"><button class="flex items-center gap-2 text-[13px]"><svg class="size-4" viewBox="0 0 16 16"><path d="M5 3.500V1.500h9.500v13H5v-2M0 8h10M7 5l3 3-3 3" fill="none" stroke="#50575f"/></svg>Import Data</button></div>
    </aside>

    <!-- Canvas -->
    <main class="relative min-w-0 flex-1 overflow-hidden bg-[#fdfefd] text-black">
      <svg class="absolute inset-0 h-full w-full"><defs><pattern id="grid" x="53" y="40" width="60" height="60" patternUnits="userSpaceOnUse"><path d="M15.500 0v60M30.500 0v60M45.500 0v60M0 15.500h60M0 30.500h60M0 45.500h60" stroke="#f7f7f6"/><path d="M.5 0v60M0 .5h60" stroke="#efefee"/></pattern></defs><rect width="100%" height="100%" fill="url(#grid)"/></svg>

      <table class="absolute left-[30px] top-[17px] h-[419px] w-[407px] table-fixed border-collapse bg-white font-['DejaVu_Sans',sans-serif]">
        <colgroup><col class="w-[72px]"><col class="w-[126px]"><col></colgroup>
        <thead><tr class="h-[52px] bg-[#cfe9f3] font-['Liberation_Sans',sans-serif] text-[19px] leading-[22px] text-[#16232b]"><th class="border border-[#8b8f92] pl-2 text-left font-normal">Run Level</th><th class="border border-[#8b8f92] pr-2 font-normal">Name</th><th class="border border-[#8b8f92] pr-3 font-normal">Description</th></tr></thead>
        <tbody class="text-[11px] leading-[13px] text-[#222]">
          <tr class="h-[52px]"><td class="border border-[#8b8f92] pr-1 text-center text-[44px] leading-[44px] font-bold text-[#1f7db8]">0</td><td class="border border-[#8b8f92] pr-3 text-center text-[19px] italic text-black">Halt</td><td class="border border-[#8b8f92] pl-2">Shuts down all services when the<br>system will not be rebooted.</td></tr>
          <tr class="h-[52px]"><td class="border border-[#8b8f92] pr-1 text-center text-[44px] leading-[44px] font-bold text-[#1f7db8]">1</td><td class="border border-[#8b8f92] pr-1 pt-1 text-center text-[19px] italic text-black">Single User</td><td class="border border-[#8b8f92] pb-2 pl-2">Used for system maintenance.<br>No Networking capabilities.</td></tr>
          <tr class="h-[52px]"><td class="border border-[#8b8f92] pr-1 text-center text-[44px] leading-[44px] font-bold text-[#1f7db8]">2</td><td class="border border-[#8b8f92] text-center italic"><p class="mt-1 pr-1 text-[22px] leading-4 text-black">MultiUser</p><p>No Network Support</p></td><td class="border border-[#8b8f92] pb-2 pl-2">Used for maintenance and<br>system testing.</td></tr>
          <tr class="h-[52px]"><td class="border border-[#8b8f92] pr-1 text-center text-[44px] leading-[44px] font-bold text-[#1f7db8]">3</td><td class="border border-[#8b8f92] pr-2 text-center italic"><p class="text-[22px] leading-4 text-black">MultiUser</p><p class="pr-1">Network Support</p></td><td class="border border-[#8b8f92] pb-2 pl-2">Non-Graphical Text Mode<br>operations for server systems.</td></tr>
          <tr class="h-[52px]"><td class="border border-[#8b8f92] pr-1 text-center text-[44px] leading-[44px] font-bold text-[#1f7db8]">4</td><td class="border border-[#8b8f92] pr-5 text-center text-[22px] text-black">-</td><td class="border border-[#8b8f92] pl-2 pt-1">Custom Mode, used by SysAdmin</td></tr>
          <tr class="h-[52px]"><td class="border border-[#8b8f92] pr-1 text-center text-[44px] leading-[44px] font-bold text-[#1f7db8]">5</td><td class="border border-[#8b8f92] pt-1 pr-2 text-center italic"><p class="text-[18px] leading-5 text-black">Graphical</p><p class="pr-2 text-[10px]">X11</p></td><td class="border border-[#8b8f92] pl-2">Graphical login with same<br>usability of Run Level 3.</td></tr>
          <tr class="h-[52px]"><td class="border border-[#8b8f92] pr-1 text-center text-[44px] leading-[44px] font-bold text-[#1f7db8]">6</td><td class="border border-[#8b8f92] pr-2 pt-1 text-center text-[18px] italic text-black">Reboot</td><td class="border border-[#8b8f92] pl-2">Shuts down all services when<br>the system is being rebooted.</td></tr>
        </tbody>
      </table>

      <article class="absolute left-[462px] top-[2px] h-[434px] w-[323px] overflow-hidden bg-[#fefefe] pl-[13px] pr-[14px] font-['DejaVu_Sans',sans-serif] text-[#1c1c1c]">
        <h2 class="mt-[15px] pr-12 text-center text-[8px] leading-[12px]">RUN LEVELS in LINUX</h2>
        <div class="mt-[15px] text-[14px] leading-[17px] whitespace-nowrap">
          <p class="[text-align-last:justify]">A <em>runlevel</em> is a preset operating state on</p>
          <p>a <a href="#" class="text-[#3025b4]">Unix-like operating system</a>.</p>
          <p class="flex justify-between"><span>A</span><span>system</span><span>can</span><span>be <a href="#" class="text-[#3025b4] italic">booted into</a> (i.e.,</span></p>
          <p class="[text-align-last:justify]">started up into) any of several runlevels,</p>
          <p class="[text-align-last:justify]">each of which is represented by a single</p>
          <p class="[text-align-last:justify]">digit integer. Each runlevel designates a</p>
          <p class="[text-align-last:justify]">different system configuration and</p>
          <p class="[text-align-last:justify]">allows access to a different combination</p>
          <p>of <a href="#" class="text-[#3025b4] italic">processes</a> (i.e.,<a href="#" class="text-[#3025b4]">instances</a> of executing</p>
          <p><a href="#" class="text-[#3025b4]">programs</a>).</p>
        </div>
        <ul class="mt-[61px] list-none text-[10px] font-bold leading-[11px] whitespace-nowrap text-[#3a3a3a]">
          <li class="relative"><span class="absolute -left-3 text-[8px]">•</span>Seven runlevels are supported in the standard <a href="#" class="text-[#3025b4]">Linux</a><br>&nbsp;<a href="#" class="text-[#3025b4] italic">kernel</a> (i.e., core of the operating system). They<br>are:<br><br>0 - System halt; no activity, the system can be<br>safely powered down.<br>1 - Single user; rarely used.<br>2 - Multiple users, no NFS (network <a href="#" class="text-[#3025b4]">filesystem</a>); also<br>used rarely.<br>3 - Multiple users, <a href="#" class="text-[#3025b4] italic">command line</a> (i.e., all-text<br>mode) <a href="#" class="text-[#3025b4]">interface</a>; the standard runlevel for most<br>Linux-based <a href="#" class="text-[#3025b4]">server</a> hardware.<br>4 - User-definable<br>5 - Multiple users, <a href="#" class="text-[#3025b4]">GUI</a> (graphical user interface); the<br>standard runlevel for most Linux-based desktop</li>
        </ul>
      </article>

      <svg class="absolute left-[182px] top-[465px] h-4 w-[10px]" viewBox="0 0 10 16"><path d="M1 1v11l2.500-2.200L5.300 14l2-.9-1.800-4H9z" fill="#111" stroke="#eee" stroke-width=".6"/></svg>
      <i class="absolute right-[2px] top-[160px] h-[156px] w-1 rounded-full bg-[#b9bcc0]"></i>
      <i class="absolute bottom-[1px] left-[296px] h-[5px] w-[296px] rounded-full bg-[#c2c3c6]"></i>
    </main>
  </div>

  <!-- Page tabs and status -->
  <footer class="flex h-[27px] shrink-0 items-center border-t border-[#e1e4ea] bg-[#fafbfd] text-[11px]">
    <div class="flex h-full w-[65px] shrink-0 items-center border-r border-[#e1e4ea] pl-[9px]">
      <button aria-label="Page list"><svg class="block size-4" viewBox="0 0 16 16"><path d="M5 2h10M5 6h10M5 10h10M5 14h10" stroke="#50575f"/><path d="M1 2h2M1 6h2M1 10h2M1 14h2" stroke="#24282c" stroke-width="2"/></svg></button>
      <button aria-label="Page grid" class="ml-[13px]"><svg class="block size-4" viewBox="0 0 16 16"><path d="M1 1h5.500v5.500H1zM9.500 1H15v5.500H9.500zM1 9.500h5.500V15H1zM9.500 9.500H15V15H9.500z" fill="none" stroke="#50575f"/></svg></button>
    </div>
    <div class="flex h-full min-w-0 flex-1 gap-[5px] overflow-hidden pb-[3px] whitespace-nowrap">
      <button class="flex w-[63px] shrink-0 items-center justify-end overflow-hidden bg-[#f2f3f5] pr-[7px]">OS-LinuxDist</button>
      <button class="shrink-0 bg-[#f2f3f5] px-[7px]">Linux-Distributions</button>
      <button class="shrink-0 bg-[#f2f3f5] px-[7px]">Linux-MySQL</button>
      <button class="shrink-0 bg-[#f2f3f5] px-[7px]">VI-Editor</button>
      <button class="shrink-0 bg-[#f2f3f5] px-[7px]">FileSystem</button>
      <button class="flex w-20 shrink-0 items-center justify-between rounded-b-[3px] bg-[#56626c] px-[6px] text-[#e6eaed]">runlevels<svg class="size-[7px]"><use href="#down"/></svg></button>
      <button class="shrink-0 bg-[#f2f3f5] px-[6px]">BootProcess</button>
      <button class="shrink-0 bg-[#f2f3f5] px-[6px]">Permissions</button>
    </div>
    <div class="flex h-full shrink-0 items-center">
      <button aria-label="Add page" class="flex h-full w-[33px] items-center justify-center border-r border-[#e1e4ea]"><svg class="size-4" viewBox="0 0 16 16"><circle cx="8" cy="8" r="7" fill="none" stroke="#50575f"/><path d="M8 4.500v7M4.500 8h7" stroke="#50575f"/></svg></button>
      <button aria-label="Previous page" class="ml-[10px]"><svg class="block h-[14px] w-2" viewBox="0 0 8 14"><path d="M7 1L1 7l6 6" fill="none" stroke="#50575f" stroke-width="1.200"/></svg></button>
      <button aria-label="Next page" class="ml-[11px]"><svg class="block h-[14px] w-2" viewBox="0 0 8 14"><path d="M1 1l6 6-6 6" fill="none" stroke="#50575f" stroke-width="1.200"/></svg></button>
      <button class="ml-[18px] flex h-full w-[134px] items-center gap-[5px] border-r border-[#e1e4ea]"><svg class="size-4" viewBox="0 0 16 16"><path d="M2 14V2h12v4M2 14h4" fill="none" stroke="#50575f"/><path d="M.5.5h3v3h-3zM12.500.5h3v3h-3zM.5 12.500h3v3h-3z" fill="#50575f"/><path d="M6.500 6l8.500 4-3.500 1.200 2.500 2.800-1.500 1.300-2.500-3L8 15z" fill="#fff" stroke="#3b4148"/></svg>Selected objects<span class="ml-1">0</span></button>
      <button aria-label="Layers" class="flex h-full w-8 items-center justify-center border-r border-[#e1e4ea]"><svg class="size-4" viewBox="0 0 16 16"><path d="M8 1l7 3.500L8 8 1 4.500zM1 8l7 3.500L15 8M1 11.500L8 15l7-3.500" fill="none" stroke="#50575f"/></svg></button>
      <button aria-label="Accessibility" class="flex h-full w-[33px] items-center justify-center border-r border-[#e1e4ea]"><svg class="size-4" viewBox="0 0 16 16"><circle cx="8" cy="8" r="7" fill="none" stroke="#50575f"/><path d="M4.500 11.500L8 3.500l3.500 8zM6 9h4" fill="none" stroke="#50575f"/></svg></button>
      <button aria-label="Zoom out" class="ml-[11px]"><svg class="block size-3" viewBox="0 0 12 12"><path d="M0 6h12" stroke="#3b4148" stroke-width="1.200"/></svg></button>
      <button class="ml-[17px] flex w-11 items-center justify-between">75%<svg class="size-[7px] text-[#23282d]"><use href="#down"/></svg></button>
      <button aria-label="Zoom in" class="ml-4"><svg class="block size-3" viewBox="0 0 12 12"><path d="M0 6h12M6 0v12" stroke="#3b4148" stroke-width="1.200"/></svg></button>
      <button aria-label="Fullscreen" class="ml-[9px] flex h-full w-[33px] items-center justify-center border-l border-[#e1e4ea]"><svg class="size-4" viewBox="0 0 16 16"><path d="M1 5V1h4M1 1l4.500 4.500M11 1h4v4M15 1l-4.500 4.500M1 11v4h4M1 15l4.500-4.500M15 11v4h-4M15 15l-4.500-4.500" fill="none" stroke="#3b4148" stroke-width="1.200"/></svg></button>
    </div>
  </footer>
</div>
</body>
</html>
